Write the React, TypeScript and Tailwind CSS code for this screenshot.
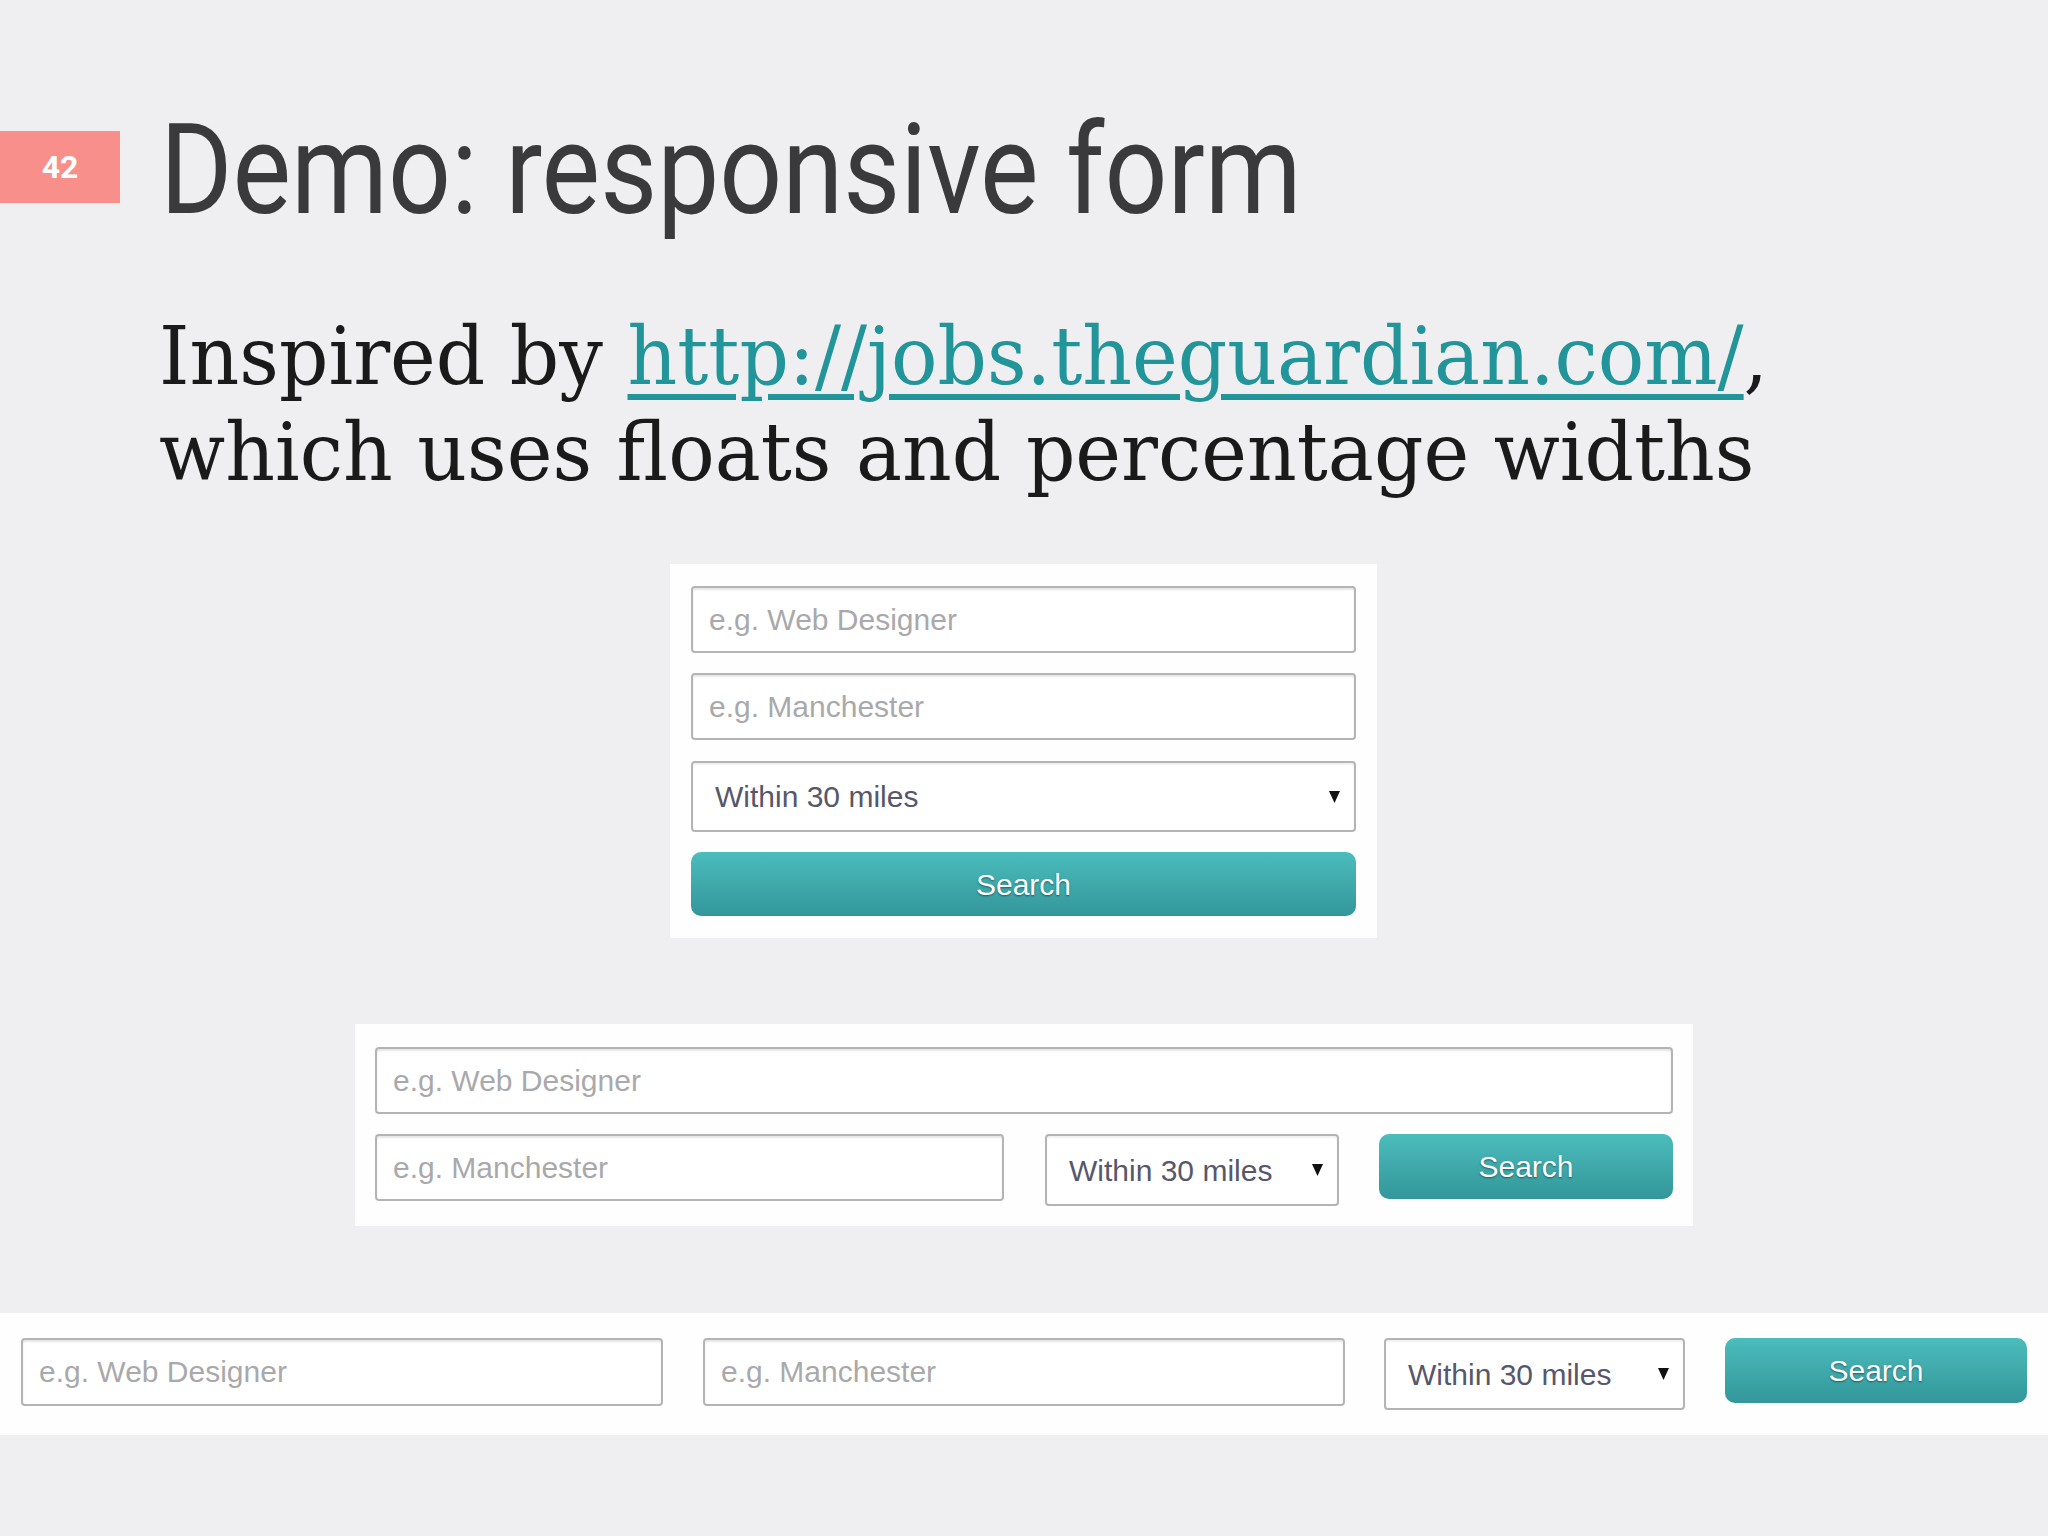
import React from "react";

const inputCls =
  "w-full h-full rounded-[4px] border-2 border-[#b4b4b6] bg-white pl-[16px] text-[30px] text-[#333] placeholder:text-[#a9a9ab] shadow-[inset_0_2px_2px_rgba(0,0,0,0.10)] outline-none";

function TextInput({ placeholder, h }: { placeholder: string; h: string }) {
  return (
    <div className={h}>
      <input className={inputCls} placeholder={placeholder} style={{ fontFamily: '"Liberation Sans", Arial, sans-serif' }} />
    </div>
  );
}

function Select({ h, textPl, arrowPr }: { h: string; textPl: string; arrowPr: string }) {
  return (
    <div
      className={`${h} ${textPl} ${arrowPr} flex items-center justify-between rounded-[4px] border-2 border-[#b4b4b6] bg-white shadow-[inset_0_2px_2px_rgba(0,0,0,0.06)]`}
      style={{ fontFamily: '"Liberation Sans", Arial, sans-serif' }}
    >
      <span className="text-[30px] text-[#57576b]">Within 30 miles</span>
      <svg width="11" height="12" viewBox="0 0 11 12" className="shrink-0">
        <path d="M0 0 H11 L5.5 12 Z" fill="#111" />
      </svg>
    </div>
  );
}

function Button({ h }: { h: string }) {
  return (
    <div
      className={`${h} flex items-center justify-center rounded-[10px] bg-linear-to-b from-[#4cbcbc] to-[#33979a] text-[30px] text-white [text-shadow:0_1px_2px_rgba(0,0,0,0.45)]`}
      style={{ fontFamily: '"Liberation Sans", Arial, sans-serif' }}
    >
      Search
    </div>
  );
}

export default function App() {
  return (
    <div className="relative w-[2048px] h-[1536px] overflow-hidden bg-[#efeff1]">
      {/* header */}
      <div className="flex items-start pt-[131px]">
        <div
          className="w-[120px] h-[72px] shrink-0 bg-[#f88f8b] flex items-center justify-center text-white text-[32px] font-bold"
          style={{ fontFamily: "Roboto, sans-serif" }}
        >
          42
        </div>
        <h1
          className="ml-[40px] mt-[-36px] text-[127px] leading-[150px] text-[#3a3a3d] whitespace-nowrap origin-left scale-x-[0.87]"
          style={{ fontFamily: "Roboto, sans-serif" }}
        >
          Demo: responsive form
        </h1>
      </div>

      <div className="pl-[159px] mt-[63px]">
        <div
          className="text-[81px] leading-[96px] text-[#1a1a1a] whitespace-nowrap origin-left scale-x-[0.954]"
          style={{ fontFamily: '"DejaVu Serif", serif' }}
        >
          <div>
            Inspired by{" "}
            <span className="text-[#21959a] underline decoration-[6px] underline-offset-[10px]">
              http://jobs.theguardian.com/
            </span>
            ,
          </div>
          <div>which uses floats and percentage widths</div>
        </div>
      </div>

      {/* form 1 */}
      <div className="absolute left-[670px] top-[564px] w-[707px] h-[374px] bg-[#fefefe] px-[21px] pt-[22px] flex flex-col gap-[21px]">
        <TextInput placeholder="e.g. Web Designer" h="h-[67px]" />
        <TextInput placeholder="e.g. Manchester" h="h-[67px] -mt-[1px]" />
        <Select h="h-[71px]" textPl="pl-[22px]" arrowPr="pr-[14px]" />
        <Button h="h-[64px] -mt-[1px]" />
      </div>

      {/* form 2 */}
      <div className="absolute left-[355px] top-[1024px] w-[1338px] h-[202px] bg-[#fefefe] px-[20px] pt-[23px] flex flex-col gap-[20px]">
        <TextInput placeholder="e.g. Web Designer" h="h-[67px]" />
        <div className="flex items-start gap-[41px]">
          <TextInput placeholder="e.g. Manchester" h="w-[629px] h-[67px]" />
          <div className="w-[294px]">
            <Select h="h-[72px]" textPl="pl-[22px]" arrowPr="pr-[14px]" />
          </div>
          <div className="w-[294px] ml-[-1px]">
            <Button h="h-[65px]" />
          </div>
        </div>
      </div>

      {/* form 3 */}
      <div className="absolute left-0 top-[1313px] w-[2048px] h-[122px] bg-[#fefefe] pl-[21px] pt-[25px] flex items-start gap-[40px]">
        <TextInput placeholder="e.g. Web Designer" h="w-[642px] h-[68px]" />
        <TextInput placeholder="e.g. Manchester" h="w-[642px] h-[68px]" />
        <div className="w-[301px] -ml-[1px]">
          <Select h="h-[72px]" textPl="pl-[22px]" arrowPr="pr-[14px]" />
        </div>
        <div className="w-[302px]">
          <Button h="h-[65px]" />
        </div>
      </div>
    </div>
  );
}
